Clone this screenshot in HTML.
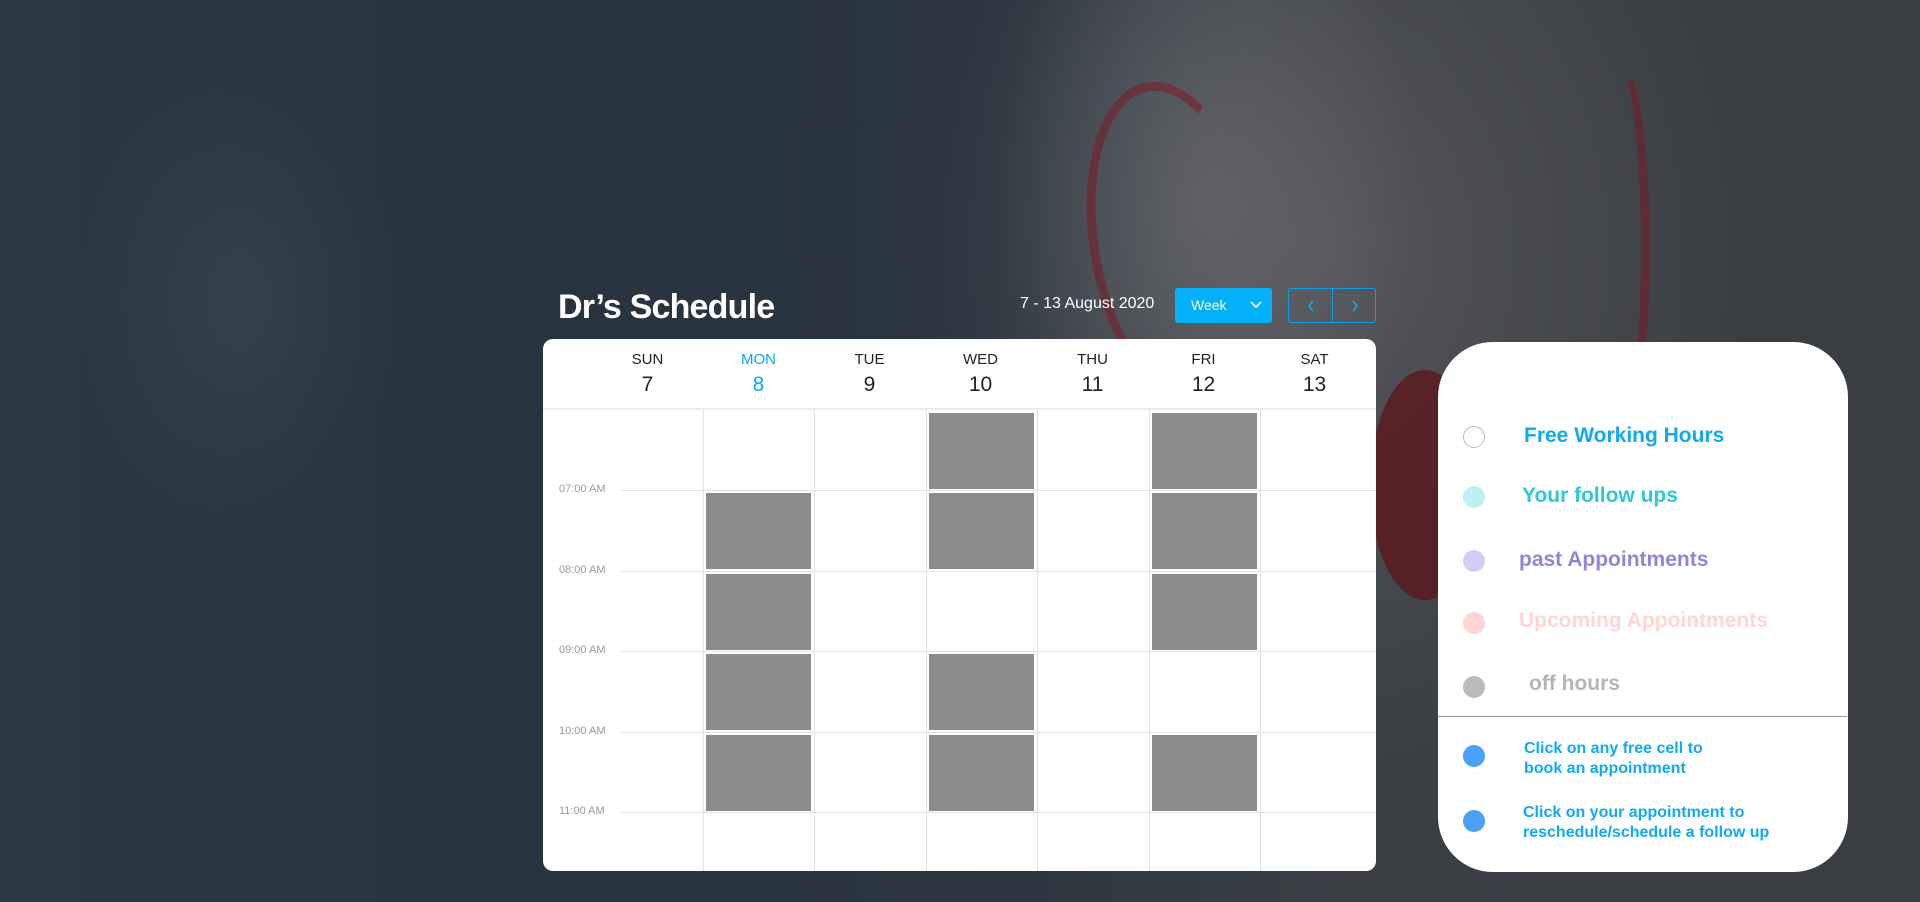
<!DOCTYPE html>
<html><head><meta charset="utf-8"><style>
*{margin:0;padding:0;box-sizing:border-box}
body{width:1920px;height:902px;overflow:hidden;position:relative;font-family:"Liberation Sans",sans-serif;
background:
radial-gradient(ellipse 300px 500px at 1210px 200px, rgba(120,120,125,.5), rgba(0,0,0,0) 70%),
radial-gradient(ellipse 560px 700px at 1330px 250px, rgba(92,92,96,.75), rgba(0,0,0,0) 75%),
radial-gradient(ellipse 200px 300px at 240px 300px, rgba(70,85,100,.35), rgba(0,0,0,0) 80%),
linear-gradient(90deg,#2c3844 0%,#27343f 30%,#2a3540 50%,#3b3f44 70%,#3a3d42 100%);}
.abs{position:absolute}
.steth{position:absolute;border:9px solid #7a1a24;border-radius:50%;opacity:.55}
.title{left:558px;top:288px;color:#fff;font-weight:bold;font-size:34px;letter-spacing:-.8px}
.date{left:1020px;top:295px;color:#fff;font-size:16px}
.week{left:1175px;top:288px;width:97px;height:35px;background:#04b0f7;border-radius:3px;color:#fff;font-size:14px;padding:9px 0 0 16px}
.nav{left:1288px;top:288px;width:88px;height:35px;border:1px solid #0a9ee8;border-radius:3px}
.nav div{position:absolute;top:0;left:43px;width:1px;height:33px;background:#0a9ee8}
.card{left:543px;top:339px;width:833px;height:532px;background:#fff;border-radius:10px;overflow:hidden}
.dn{position:absolute;width:111px;text-align:center;font-size:15px;color:#222;top:12px}
.dd{position:absolute;width:111px;text-align:center;font-size:21px;color:#222;top:34px}
.vl{position:absolute;top:70px;width:1px;height:470px;background:#e2e2e2}
.hl{position:absolute;left:78px;width:755px;height:1px;background:#e2e2e2}
.tl{position:absolute;left:16px;font-size:11px;color:#999}
.blk{position:absolute;background:#8c8c8c;width:105px;height:76px}
.leg{left:1438px;top:342px;width:410px;height:530px;background:#fff;border-radius:55px}
.li{position:absolute;font-weight:bold;font-size:21px}
.dot{position:absolute;width:22px;height:22px;border-radius:50%;left:25px}
.ti{position:absolute;font-weight:bold;font-size:16px;color:#12a9f0;line-height:20px}
</style></head><body>
<div class="steth" style="left:1090px;top:80px;width:170px;height:330px;border-color:#7c1a25 transparent transparent #7c1a25;transform:rotate(-10deg)"></div>
<div class="steth" style="left:1590px;top:60px;width:60px;height:380px;border-color:transparent #7a1a24 transparent transparent"></div>
<div class="abs" style="left:1370px;top:370px;width:110px;height:230px;background:#5e1014;border-radius:50%;opacity:.7"></div>

<div class="abs title">Dr’s Schedule</div>
<div class="abs date">7 - 13 August 2020</div>
<div class="abs week">Week<svg style="position:absolute;left:75px;top:13px" width="12" height="8"><path d="M1 1l5 5 5-5" stroke="#fff" stroke-width="1.6" fill="none"/></svg></div>
<div class="abs nav"><div></div>
<svg style="position:absolute;left:18px;top:11px" width="8" height="12"><path d="M6 1L2 6l4 5" stroke="#1aa7f0" stroke-width="1.6" fill="none"/></svg>
<svg style="position:absolute;left:62px;top:11px" width="8" height="12"><path d="M2 1l4 5-4 5" stroke="#1aa7f0" stroke-width="1.6" fill="none"/></svg></div>

<div class="abs card">
<div class="dn" style="left:49px">SUN</div><div class="dd" style="left:49px">7</div>
<div class="dn" style="left:160px;color:#04aaf2">MON</div><div class="dd" style="left:160px;color:#04aaf2">8</div>
<div class="dn" style="left:271px">TUE</div><div class="dd" style="left:271px">9</div>
<div class="dn" style="left:382px">WED</div><div class="dd" style="left:382px">10</div>
<div class="dn" style="left:494px">THU</div><div class="dd" style="left:494px">11</div>
<div class="dn" style="left:605px">FRI</div><div class="dd" style="left:605px">12</div>
<div class="dn" style="left:716px">SAT</div><div class="dd" style="left:716px">13</div>
<div style="position:absolute;left:0;top:69px;width:833px;height:2px;background:#ececec"></div>
<div class="vl" style="left:160px"></div><div class="vl" style="left:271px"></div><div class="vl" style="left:383px"></div><div class="vl" style="left:494px"></div><div class="vl" style="left:606px"></div><div class="vl" style="left:717px"></div>
<div class="hl" style="top:151px"></div><div class="hl" style="top:232px"></div><div class="hl" style="top:312px"></div><div class="hl" style="top:393px"></div><div class="hl" style="top:473px"></div>
<div class="tl" style="top:144px">07:00 AM</div><div class="tl" style="top:225px">08:00 AM</div><div class="tl" style="top:305px">09:00 AM</div><div class="tl" style="top:386px">10:00 AM</div><div class="tl" style="top:466px">11:00 AM</div>
<div class="blk" style="left:386px;top:74px"></div><div class="blk" style="left:386px;top:154px"></div><div class="blk" style="left:386px;top:315px"></div><div class="blk" style="left:386px;top:396px"></div>
<div class="blk" style="left:609px;top:74px"></div><div class="blk" style="left:609px;top:154px"></div><div class="blk" style="left:609px;top:235px"></div><div class="blk" style="left:609px;top:396px"></div>
<div class="blk" style="left:163px;top:154px"></div><div class="blk" style="left:163px;top:235px"></div><div class="blk" style="left:163px;top:315px"></div><div class="blk" style="left:163px;top:396px"></div>
</div>

<div class="abs leg">
<div class="dot" style="top:84px;border:1.5px solid #bbb"></div><div class="li" style="left:86px;top:82px;color:#12a9f0">Free Working Hours</div>
<div class="dot" style="top:144px;background:#bff0f2"></div><div class="li" style="left:84px;top:142px;color:#2ec8d6">Your follow ups</div>
<div class="dot" style="top:208px;background:#d4cdf8"></div><div class="li" style="left:81px;top:206px;color:#9484d8">past Appointments</div>
<div class="dot" style="top:270px;background:#ffd5d5"></div><div class="li" style="left:81px;top:267px;color:#ffd5d5">Upcoming Appointments</div>
<div class="dot" style="top:334px;background:#bbb"></div><div class="li" style="left:91px;top:330px;color:#b5b5b5">off hours</div>
<div style="position:absolute;left:0;top:374px;width:409px;height:1px;background:#999"></div>
<div class="dot" style="top:403px;background:#4aa0f5"></div><div class="ti" style="left:86px;top:397px">Click on any free cell to<br>book an appointment</div>
<div class="dot" style="top:468px;background:#4aa0f5"></div><div class="ti" style="left:85px;top:461px">Click on your appointment to<br>reschedule/schedule a follow up</div>
</div>
</body></html>
